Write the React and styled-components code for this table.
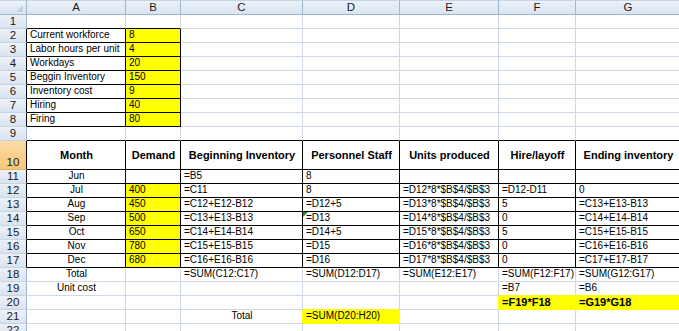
import styled, { createGlobalStyle, css } from "styled-components";

const GRID = "#d0d7e5";
const EDGE = "#9eb6ce";
const INK = "#000";
const YELLOW = "#ffff00";

const COLUMNS = [
  { key: "A", width: 99 },
  { key: "B", width: 55 },
  { key: "C", width: 122 },
  { key: "D", width: 97 },
  { key: "E", width: 99 },
  { key: "F", width: 77 },
  { key: "G", width: 105 },
];

const ROW_COUNT = 22;
const rowHeight = (r) => (r === 10 ? 29 : 14);

const c = (text, opts = {}) => ({ text, ...opts });
const mid = (text, opts = {}) => c(text, { align: "center", ...opts });
const hi = (text, opts = {}) => c(text, { fill: YELLOW, ...opts });

// cell contents by address
const SHEET = {
  A2: c("Current workforce"), B2: hi("8"),
  A3: c("Labor hours per unit"), B3: hi("4"),
  A4: c("Workdays"), B4: hi("20"),
  A5: c("Beggin Inventory"), B5: hi("150"),
  A6: c("Inventory cost"), B6: hi("9"),
  A7: c("Hiring"), B7: hi("40"),
  A8: c("Firing"), B8: hi("80"),

  A10: mid("Month", { bold: true, header: true }),
  B10: mid("Demand", { bold: true, header: true }),
  C10: mid("Beginning Inventory", { bold: true, header: true }),
  D10: mid("Personnel Staff", { bold: true, header: true }),
  E10: mid("Units produced", { bold: true, header: true }),
  F10: mid("Hire/layoff", { bold: true, header: true }),
  G10: mid("Ending inventory", { bold: true, header: true }),

  A11: mid("Jun"), C11: c("=B5"), D11: c("8"),
  A12: mid("Jul"), B12: hi("400"), C12: c("=C11"), D12: c("8"),
  E12: c("=D12*8*$B$4/$B$3"), F12: c("=D12-D11"), G12: c("0"),
  A13: mid("Aug"), B13: hi("450"), C13: c("=C12+E12-B12"), D13: c("=D12+5"),
  E13: c("=D13*8*$B$4/$B$3"), F13: c("5"), G13: c("=C13+E13-B13"),
  A14: mid("Sep"), B14: hi("500"), C14: c("=C13+E13-B13"), D14: c("=D13", { flag: true }),
  E14: c("=D14*8*$B$4/$B$3"), F14: c("0"), G14: c("=C14+E14-B14"),
  A15: mid("Oct"), B15: hi("650"), C15: c("=C14+E14-B14"), D15: c("=D14+5"),
  E15: c("=D15*8*$B$4/$B$3"), F15: c("5"), G15: c("=C15+E15-B15"),
  A16: mid("Nov"), B16: hi("780"), C16: c("=C15+E15-B15"), D16: c("=D15"),
  E16: c("=D16*8*$B$4/$B$3"), F16: c("0"), G16: c("=C16+E16-B16"),
  A17: mid("Dec"), B17: hi("680"), C17: c("=C16+E16-B16"), D17: c("=D16"),
  E17: c("=D17*8*$B$4/$B$3"), F17: c("0"), G17: c("=C17+E17-B17"),

  A18: mid("Total"), C18: c("=SUM(C12:C17)"), D18: c("=SUM(D12:D17)"),
  E18: c("=SUM(E12:E17)"), F18: c("=SUM(F12:F17)"), G18: c("=SUM(G12:G17)"),
  A19: mid("Unit cost"), F19: c("=B7"), G19: c("=B6"),
  F20: hi("=F19*F18", { bold: true }), G20: hi("=G19*G18", { bold: true }),
  C21: mid("Total"), D21: hi("=SUM(D20:H20)"),
};

const cellAt = (r, ci) => (ci < COLUMNS.length ? SHEET[COLUMNS[ci].key + r] : undefined);
const boxed = (r, ci) =>
  ci >= 0 && ci < COLUMNS.length && ((r >= 2 && r <= 8 && ci <= 1) || (r >= 10 && r <= 17));
const fillAt = (r, ci) => cellAt(r, ci)?.fill;

const edgeColor = (r, ci, nr, nci) => {
  if (boxed(r, ci) || boxed(nr, nci)) return INK;
  return fillAt(r, ci) || fillAt(nr, nci) || GRID;
};

const GlobalStyle = createGlobalStyle`
  html, body {
    margin: 0;
    padding: 0;
    background: #fff;
    overflow: hidden;
  }
  body {
    font-family: "Liberation Sans", Arial, sans-serif;
  }
`;

const Sheet = styled.div`
  display: grid;
  grid-template-columns: 27px ${COLUMNS.map((col) => `${col.width}px`).join(" ")};
  grid-template-rows: 15px ${Array.from({ length: ROW_COUNT }, (_, i) => `${rowHeight(i + 1)}px`).join(" ")};
  width: 679px;
  height: 331px;
  overflow: hidden;
  color: ${INK};
`;

const headerFace = css`
  box-sizing: border-box;
  background: linear-gradient(#edf2f9, #d9e3f0);
  color: #1a1a1a;
  font-size: 11.5px;
  display: flex;
  justify-content: center;
`;

const Corner = styled.div`
  ${headerFace};
  position: relative;
  border-top: 1px solid #c4d3e6;
  border-right: 1px solid ${EDGE};
  border-bottom: 1px solid ${EDGE};

  &::after {
    content: "";
    position: absolute;
    right: 3px;
    bottom: 2px;
    border-left: 7px solid transparent;
    border-bottom: 7px solid #c3cfdd;
  }
`;

const ColHeader = styled.div`
  ${headerFace};
  align-items: center;
  border-top: 1px solid #c4d3e6;
  border-right: 1px solid ${EDGE};
  border-bottom: 1px solid ${EDGE};
  line-height: 13px;
`;

const RowHeader = styled.div`
  ${headerFace};
  align-items: flex-end;
  padding-bottom: 1px;
  line-height: 12px;
  border-right: 1px solid ${(p) => p.$edge};
  border-bottom: 1px solid #c5d3e3;
  ${(p) =>
    p.$active &&
    css`
      background: linear-gradient(#fbdca6, #f6c677);
      border-bottom-color: #e3b461;
    `}
`;

const Cell = styled.div`
  box-sizing: border-box;
  position: relative;
  display: flex;
  align-items: ${(p) => (p.$header ? "center" : "flex-end")};
  justify-content: ${(p) => (p.$align === "center" ? "center" : "flex-start")};
  padding: 0 2px 1px 3px;
  white-space: nowrap;
  overflow: visible;
  line-height: 12px;
  background: ${(p) => p.$fill || "#fff"};
  border-right: 1px solid ${(p) => p.$right};
  border-bottom: 1px solid ${(p) => p.$bottom};
  font-size: ${(p) => (p.$bold ? "11px" : "10px")};
  font-weight: ${(p) => (p.$bold ? 700 : 400)};
`;

const ErrorFlag = styled.span`
  position: absolute;
  left: 0;
  top: 0;
  border-top: 5px solid #2e8b3a;
  border-right: 5px solid transparent;
`;

export default function App() {
  const rows = Array.from({ length: ROW_COUNT }, (_, i) => i + 1);

  return (
    <>
      <GlobalStyle />
      <Sheet>
        <Corner />
        {COLUMNS.map((col) => (
          <ColHeader key={col.key}>{col.key}</ColHeader>
        ))}
        {rows.map((r) => [
          <RowHeader key={`h${r}`} $active={r === 10} $edge={boxed(r, 0) ? INK : EDGE}>
            {r}
          </RowHeader>,
          ...COLUMNS.map((col, ci) => {
            const cell = SHEET[col.key + r] || {};
            return (
              <Cell
                key={col.key + r}
                $align={cell.align}
                $bold={cell.bold}
                $header={cell.header}
                $fill={cell.fill}
                $right={edgeColor(r, ci, r, ci + 1)}
                $bottom={edgeColor(r, ci, r + 1, ci)}
              >
                {cell.flag && <ErrorFlag />}
                {cell.text}
              </Cell>
            );
          }),
        ])}
      </Sheet>
    </>
  );
}
